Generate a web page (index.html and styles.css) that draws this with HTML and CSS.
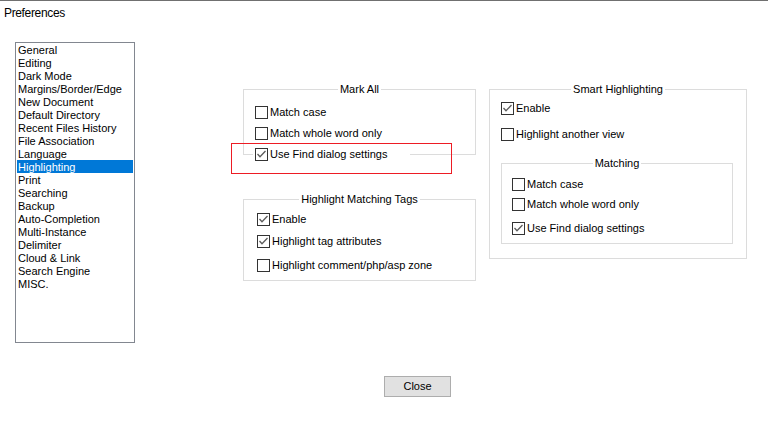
FILE: index.html
```html
<!DOCTYPE html>
<html>
<head>
<meta charset="utf-8">
<title>Preferences</title>
<link rel="stylesheet" href="styles.css">
</head>
<body>
<div class="topline"></div>
<div class="title">Preferences</div>
<div class="main">
  <ul class="list">
    <li>General</li>
    <li>Editing</li>
    <li>Dark Mode</li>
    <li>Margins/Border/Edge</li>
    <li>New Document</li>
    <li>Default Directory</li>
    <li>Recent Files History</li>
    <li>File Association</li>
    <li>Language</li>
    <li class="sel">Highlighting</li>
    <li>Print</li>
    <li>Searching</li>
    <li>Backup</li>
    <li>Auto-Completion</li>
    <li>Multi-Instance</li>
    <li>Delimiter</li>
    <li>Cloud &amp; Link</li>
    <li>Search Engine</li>
    <li>MISC.</li>
  </ul>
  <div class="panels">
    <div class="col col1">
      <div class="group markall">
        <div class="legend">Mark All</div>
        <div class="row r-ma1"><span class="cb"></span><span>Match case</span></div>
        <div class="row r-ma2"><span class="cb"></span><span>Match whole word only</span></div>
        <div class="row r-ma3"><span class="cb on"><svg viewBox="0 0 11 11"><polyline points="1.5,5 4,7.8 9.5,2"/></svg></span><span>Use Find dialog settings</span></div>
      </div>
      <div class="group tags">
        <div class="legend">Highlight Matching Tags</div>
        <div class="row r-t1"><span class="cb on"><svg viewBox="0 0 11 11"><polyline points="1.5,5 4,7.8 9.5,2"/></svg></span><span>Enable</span></div>
        <div class="row r-t2"><span class="cb on"><svg viewBox="0 0 11 11"><polyline points="1.5,5 4,7.8 9.5,2"/></svg></span><span>Highlight tag attributes</span></div>
        <div class="row r-t3"><span class="cb"></span><span>Highlight comment/php/asp zone</span></div>
      </div>
    </div>
    <div class="col col2">
      <div class="group smart">
        <div class="legend">Smart Highlighting</div>
        <div class="row r-s1"><span class="cb on"><svg viewBox="0 0 11 11"><polyline points="1.5,5 4,7.8 9.5,2"/></svg></span><span>Enable</span></div>
        <div class="row r-s2"><span class="cb"></span><span>Highlight another view</span></div>
        <div class="group matching">
          <div class="legend">Matching</div>
          <div class="row r-m1"><span class="cb"></span><span>Match case</span></div>
          <div class="row r-m2"><span class="cb"></span><span>Match whole word only</span></div>
          <div class="row r-m3"><span class="cb on"><svg viewBox="0 0 11 11"><polyline points="1.5,5 4,7.8 9.5,2"/></svg></span><span>Use Find dialog settings</span></div>
        </div>
      </div>
    </div>
  </div>
</div>
<div class="footer">
  <button class="btn">Close</button>
</div>
<div class="annot"></div>
</body>
</html>
```

FILE: styles.css
```css
html, body {
  margin: 0;
  padding: 0;
  background: #ffffff;
}
body {
  font-family: "Liberation Sans", Arial, sans-serif;
  font-size: 11px;
  color: #000000;
  width: 768px;
  height: 428px;
  overflow: hidden;
  position: relative;
}
.topline {
  height: 1px;
  background: #707070;
}
.title {
  box-sizing: border-box;
  height: 41px;
  padding: 5px 0 0 4px;
  font-size: 12px;
  line-height: 14px;
  letter-spacing: -0.35px;
}
.main {
  display: flex;
  align-items: flex-start;
  padding-left: 15px;
}
.list {
  box-sizing: border-box;
  width: 120px;
  height: 301px;
  margin: 0;
  padding: 0 1px;
  list-style: none;
  border: 1px solid #828790;
  background: #fff;
}
.list li {
  box-sizing: border-box;
  height: 13px;
  padding: 2px 0 0 1px;
  line-height: 11px;
  white-space: nowrap;
}
.list li.sel {
  background: #0078d7;
  color: #fff;
}
.panels {
  display: flex;
  align-items: flex-start;
  margin-left: 108px;
  padding-top: 47px;
}
.col1 {
  width: 233px;
}
.col2 {
  width: 258px;
  margin-left: 13px;
}
.group {
  box-sizing: border-box;
  border: 1px solid #dcdcdc;
}
.legend {
  display: table;
  margin: -7px auto 0;
  padding: 0 2px;
  background: #fff;
  line-height: 13px;
  white-space: nowrap;
}
.row {
  display: flex;
  align-items: center;
  height: 13px;
  line-height: 13px;
  white-space: nowrap;
  background: #fff;
}
.row > span:last-child {
  margin-left: 2px;
}
.cb {
  box-sizing: border-box;
  width: 13px;
  height: 13px;
  flex: none;
  border: 1px solid #333333;
  background: #fff;
  display: flex;
}
.cb svg {
  width: 11px;
  height: 11px;
}
.cb polyline {
  fill: none;
  stroke: #5c5c5c;
  stroke-width: 1.3;
}

/* Mark All */
.markall {
  height: 66px;
}
.markall .row {
  margin-left: 11px;
}
.r-ma1 { margin-top: 10px; }
.r-ma2 { margin-top: 8px; }
.markall .r-ma3 {
  margin-top: 8px;
  margin-left: 9px;
  padding-left: 2px;
  width: 155px;
}

/* Highlight Matching Tags */
.tags {
  margin-top: 44px;
  padding-bottom: 8px;
}
.tags .row { margin-left: 13px; }
.r-t1 { margin-top: 7px; }
.r-t2 { margin-top: 9px; }
.r-t3 { margin-top: 11px; }

/* Smart Highlighting */
.smart {
  padding-bottom: 14px;
}
.smart > .row { margin-left: 11px; }
.r-s1 { margin-top: 6px; }
.r-s2 { margin-top: 13px; }
.matching {
  width: 232px;
  margin: 22px 0 0 11px;
  padding-bottom: 8px;
}
.matching .row { margin-left: 10px; }
.r-m1 { margin-top: 8px; }
.r-m2 { margin-top: 7px; }
.r-m3 { margin-top: 11px; }

.footer {
  padding: 33px 0 0 384px;
}
.btn {
  box-sizing: border-box;
  width: 67px;
  height: 21px;
  margin: 0;
  padding: 0;
  border: 1px solid #adadad;
  background: #e1e1e1;
  font-family: "Liberation Sans", Arial, sans-serif;
  font-size: 11px;
  color: #000;
  line-height: 19px;
}
.annot {
  position: absolute;
  left: 231px;
  top: 143px;
  width: 221px;
  height: 31px;
  box-sizing: border-box;
  border: 1px solid #ed1c24;
}
```
